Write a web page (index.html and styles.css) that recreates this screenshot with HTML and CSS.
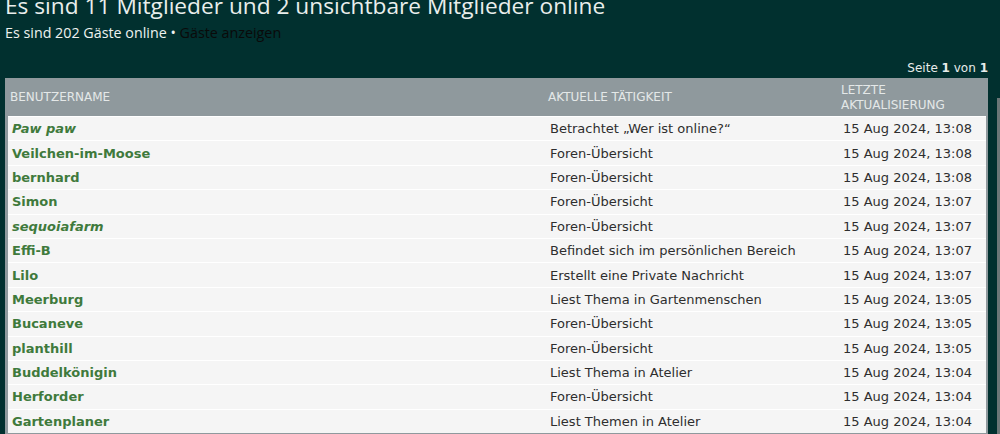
FILE: index.html
```html
<!DOCTYPE html>
<html lang="de">
<head>
<meta charset="utf-8">
<title>Wer ist online?</title>
<link rel="stylesheet" href="styles.css">
</head>
<body>
<div class="page">
  <h2 class="title">Es sind 11 Mitglieder und 2 unsichtbare Mitglieder online</h2>
  <p class="guests">Es sind 202 Gäste online • <a href="#" class="guest-link">Gäste anzeigen</a></p>
  <div class="pagination">Seite <strong>1</strong> von <strong>1</strong></div>
  <div class="layout">
    <div class="panel">
      <div class="thead">
        <div class="th">Benutzername</div>
        <div class="th">Aktuelle Tätigkeit</div>
        <div class="th">Letzte Aktualisierung</div>
      </div>
      <div class="row"><a class="user italic">Paw paw</a><span class="act">Betrachtet „Wer ist online?“</span><span class="time">15 Aug 2024, 13:08</span></div>
      <div class="row"><a class="user">Veilchen-im-Moose</a><span class="act">Foren-Übersicht</span><span class="time">15 Aug 2024, 13:08</span></div>
      <div class="row"><a class="user">bernhard</a><span class="act">Foren-Übersicht</span><span class="time">15 Aug 2024, 13:08</span></div>
      <div class="row"><a class="user">Simon</a><span class="act">Foren-Übersicht</span><span class="time">15 Aug 2024, 13:07</span></div>
      <div class="row"><a class="user italic">sequoiafarm</a><span class="act">Foren-Übersicht</span><span class="time">15 Aug 2024, 13:07</span></div>
      <div class="row"><a class="user">Effi-B</a><span class="act">Befindet sich im persönlichen Bereich</span><span class="time">15 Aug 2024, 13:07</span></div>
      <div class="row"><a class="user">Lilo</a><span class="act">Erstellt eine Private Nachricht</span><span class="time">15 Aug 2024, 13:07</span></div>
      <div class="row"><a class="user">Meerburg</a><span class="act">Liest Thema in Gartenmenschen</span><span class="time">15 Aug 2024, 13:05</span></div>
      <div class="row"><a class="user">Bucaneve</a><span class="act">Foren-Übersicht</span><span class="time">15 Aug 2024, 13:05</span></div>
      <div class="row"><a class="user">planthill</a><span class="act">Foren-Übersicht</span><span class="time">15 Aug 2024, 13:05</span></div>
      <div class="row"><a class="user">Buddelkönigin</a><span class="act">Liest Thema in Atelier</span><span class="time">15 Aug 2024, 13:04</span></div>
      <div class="row"><a class="user">Herforder</a><span class="act">Foren-Übersicht</span><span class="time">15 Aug 2024, 13:04</span></div>
      <div class="row"><a class="user">Gartenplaner</a><span class="act">Liest Themen in Atelier</span><span class="time">15 Aug 2024, 13:04</span></div>
    </div>
    <div class="side"></div>
  </div>
</div>
</body>
</html>
```
FILE: styles.css
```css
html, body {
  margin: 0;
  padding: 0;
  background: #01302f;
  overflow: hidden;
  height: 434px;
}
body {
  font-family: "DejaVu Sans", Verdana, sans-serif;
  color: #e8ecea;
}
.page {
  padding: 0 0 0 5px;
}
.title {
  margin: -9px 0 0 0;
  font-family: "Open Sans", "DejaVu Sans", sans-serif;
  font-weight: normal;
  font-size: 22.7px;
  line-height: 30px;
  color: #e9eeec;
}
.guests {
  margin: 3px 0 0 0;
  font-family: "Open Sans", "DejaVu Sans", sans-serif;
  font-size: 14.3px;
  line-height: 18px;
  color: #eef2f0;
}
.guest-link {
  color: #0a0a0a;
  text-decoration: none;
}
.pagination {
  margin: 18px 12px 0 0;
  text-align: right;
  font-size: 12px;
  line-height: 16px;
  color: #e8ecea;
}
.pagination strong {
  font-weight: bold;
}
.layout {
  display: flex;
  gap: 9px;
  margin-top: 2px;
}
.panel {
  flex: 1;
  background: #8f999d;
  padding: 0 2px 2px 3px;
}
.side {
  width: 8px;
  margin-top: 20px;
  background: #6b7677;
  margin-right: -5px;
}
.thead, .row {
  display: grid;
  grid-template-columns: 538px 293px 1fr;
}
.thead {
  height: 38px;
  align-items: center;
}
.th {
  padding-left: 2px;
  font-size: 12px;
  line-height: 15px;
  text-transform: uppercase;
  color: #e4e8e8;
}
.th:last-child {
  padding-top: 1px;
  padding-right: 10px;
}
.row {
  height: 23.4px;
  border-top: 1px solid #ffffff;
  background: #f5f5f5;
  align-items: center;
  font-size: 13px;
  color: #2e2e2e;
}
.row > * {
  padding-left: 4px;
  white-space: nowrap;
}
.user {
  font-weight: bold;
  color: #3f7a3c;
  text-decoration: none;
}
.user.italic {
  font-style: italic;
}
```
